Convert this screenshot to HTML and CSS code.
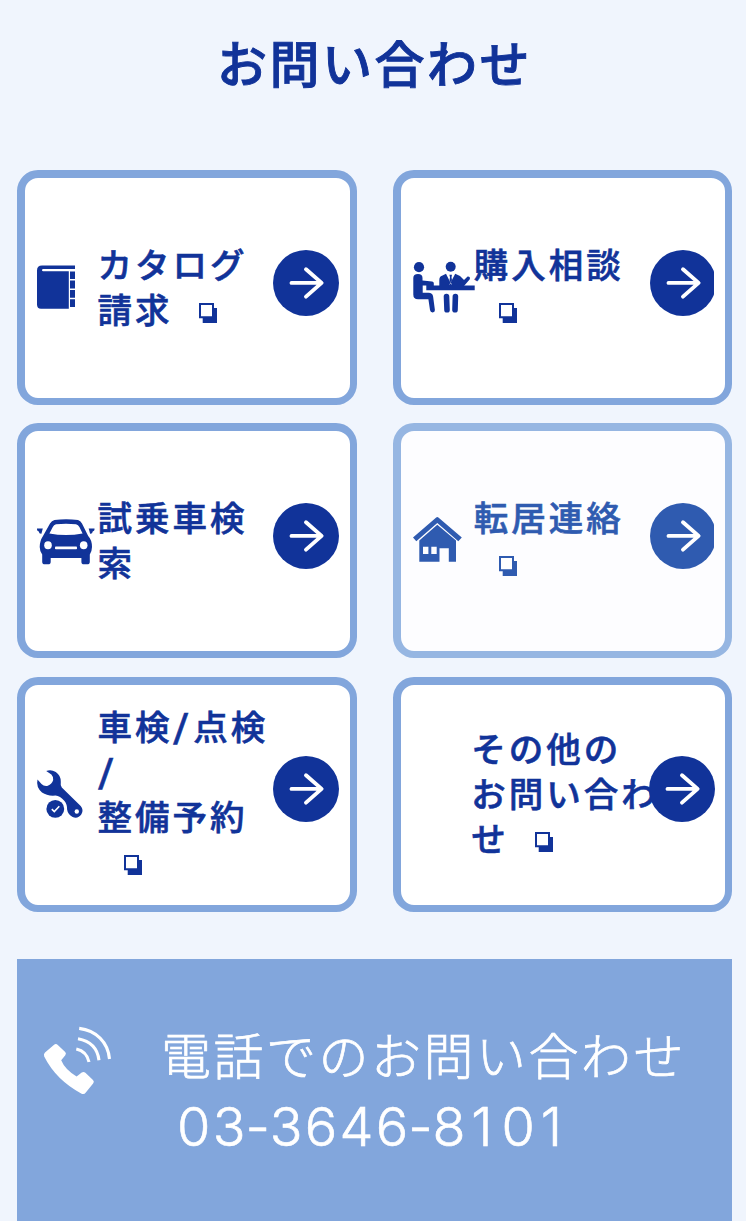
FILE: index.html
```html
<!DOCTYPE html>
<html lang="ja">
<head>
<meta charset="utf-8">
<title>お問い合わせ</title>
<link rel="stylesheet" href="styles.css">
</head>
<body>
<svg class="defs" width="0" height="0" aria-hidden="true">
  <symbol id="arrow" viewBox="0 0 66 66"><circle cx="33" cy="33" r="33" fill="currentColor"/><path d="M18.5 32.9H48M33 19.2L48.6 32.9L33 46.6" fill="none" stroke="#fff" stroke-width="3.9" stroke-linecap="round" stroke-linejoin="round"/></symbol>
  <symbol id="ext" viewBox="0 0 18 20"><path d="M3.7 5H18V20H3.7Z" fill="currentColor"/><path d="M1 1H14V14.3H1Z" fill="#fff" stroke="currentColor" stroke-width="2"/></symbol>
</svg>
<main class="page">
  <h1 class="title">お問い合わせ</h1>
  <nav class="cards">
    <a class="card">
      <svg class="icon" viewBox="0 0 61 60"><g fill="currentColor"><path d="M38 7.6H5Q0 7.6 0 12.6V46.6Q0 50.8 4 50.8H31.8V13.3H6.2Q5 13.3 5 12.2T6.2 11.1H38Z"/><path d="M33 13.5h5v7.6h-5zM33 22.6h5v7.8h-5zM33 31.9h5v7.8h-5zM33 41.2h5v7.8h-5z"/></g></svg>
      <span class="label"><span>カタログ</span><span>請求<svg class="ext after"><use href="#ext"/></svg></span></span>
      <svg class="arrow"><use href="#arrow"/></svg>
    </a>
    <a class="card">
      <svg class="icon" viewBox="0 0 61 60"><g fill="currentColor"><circle cx="6" cy="9.2" r="5.1"/><circle cx="37.7" cy="8.8" r="5"/><path d="M.3 20Q.3 15.9 5 15.9Q9.5 15.9 9.5 20V22.6L19 23.4Q20.8 23.7 20.8 25.2V27.5H61.7V32.2H13.3V27.6H9.7V34.8H15.5Q19.5 34.8 20.1 38.5L21.9 52Q22 54.2 19.7 54.4Q17.4 54.5 17 52L15.4 41.3H5Q.3 41.3 .3 36.5Z"/><path d="M26.3 27.5V22Q26.3 18.7 29 17.8L33 15.7L37.5 24.7L42.2 15.7L47 18L51 22L54.6 18.6Q57.6 18.4 56.8 21.3L51 28H26.3Z"/><path d="M36.4 16.8H39L38.5 19.3L39 22.3L37.7 24.4L36.5 22.3L37 19.3Z"/></g><path d="M33.5 38.5L34 51.8M42.4 38.5L42 51.8" stroke="currentColor" stroke-width="5.6" stroke-linecap="round"/><path d="M36.5 26.3l1.2-1 1.2 1" fill="none" stroke="#fff" stroke-width=".7"/></svg>
      <span class="label"><span>購入相談</span><span><svg class="ext indent"><use href="#ext"/></svg></span></span>
      <svg class="arrow clip"><use href="#arrow" width="66" height="66"/></svg>
    </a>
    <a class="card">
      <svg class="icon" viewBox="0 0 61 60"><g fill="currentColor"><path d="M0 17.5H5.8L4.4 22.8Q2 23 1.8 20.6Q0 20.3 0 18.6Z"/><path d="M57.5 17.5H51.7L53.1 22.8Q55.5 23 55.7 20.6Q57.5 20.3 57.5 18.6Z"/><path fill-rule="evenodd" d="M17.5 9Q29 7.5 41 9Q43.5 9.5 45 12.5L51.2 25Q55 29 55 36Q55 40 52.8 43.5V50.7Q52.8 53.3 50 53.3H47Q44.4 53.3 44.4 50.7V47H13.7V50.7Q13.7 53.3 11 53.3H8Q5.2 53.3 5.2 50.7V43.5Q2.7 40 2.7 36Q2.7 30 6 25L13 12.5Q14.7 9.5 17.5 9ZM19 13.2Q16.8 13.7 15.8 16L12.4 22.5Q29 25.5 45.6 22.5L42.4 16Q41.3 13.7 39 13.2Q29 12.2 19 13.2Z"/></g><g fill="#fff"><ellipse cx="11" cy="34.3" rx="3.8" ry="4"/><ellipse cx="46.7" cy="34.3" rx="3.8" ry="4"/><rect x="18" y="35.4" width="22" height="2.8" rx=".8"/></g></svg>
      <span class="label"><span>試乗車検</span><span>索</span></span>
      <svg class="arrow"><use href="#arrow"/></svg>
    </a>
    <a class="card faded">
      <svg class="icon" viewBox="0 0 61 60"><path fill="currentColor" fill-rule="evenodd" d="M23.2 6.5Q24.3 5.6 25.4 6.5L48.8 26.5L45.3 30.2L24.3 12.1L3.3 30.2L0 26.5ZM24.3 13.7L43 29.5V50.7H35.8V37.2H26.5V50.7H6.3V29.5ZM10 35.7V43.1H15.4V35.7ZM18.3 35.7V43.1H23.7V35.7Z"/></svg>
      <span class="label"><span>転居連絡</span><span><svg class="ext indent"><use href="#ext"/></svg></span></span>
      <svg class="arrow clip"><use href="#arrow" width="66" height="66"/></svg>
    </a>
    <a class="card">
      <svg class="icon" viewBox="0 0 61 60"><path fill="currentColor" d="M9.2 6.1Q14 4.1 18.8 7.1Q23.8 10.5 23.8 16.7Q23.2 20.8 24.8 22.5L43.7 41Q47 45.1 44.4 49.2Q41 54.1 35.6 52Q30.8 49.3 30.1 44.5Q30.2 39.3 27.5 36Q23 30.8 18.5 30.5Q10.5 31.3 5 27.5Q-1.2 22 .5 14.5L4.5 19Q6.8 21.4 10.2 20.9Q14.8 19.7 16.2 15Q16.7 11.9 14.4 9.4Z"/><circle cx="39.8" cy="46.5" r="2.2" fill="#fff"/><circle cx="18.3" cy="43.9" r="8.9" fill="currentColor"/><path d="M14.8 44.1l2.5 2.4 5-5.2" fill="none" stroke="#fff" stroke-width="1.6"/></svg>
      <span class="label"><span>車検<b class="slash">/</b>点検</span><span><b class="slash">/</b></span><span>整備予約</span><span><svg class="ext indent wide"><use href="#ext"/></svg></span></span>
      <svg class="arrow"><use href="#arrow"/></svg>
    </a>
    <a class="card">
      <span class="icon"></span>
      <span class="label other"><span>その他の</span><span>お問い合わ</span><span>せ<svg class="ext after"><use href="#ext"/></svg></span></span>
      <svg class="arrow"><use href="#arrow"/></svg>
    </a>
  </nav>
  <section class="phone">
    <svg class="phone-icon" viewBox="0 0 70 70"><path fill="#fff" d="M2 26.5L10.8 19Q12.9 17.2 14.8 19L22.2 26Q23.6 27.6 22.3 29.3L18.2 34.2Q22 43.5 33.6 50.4L38.7 46.6Q40.6 45.2 42.4 46.8L50 54Q51.7 55.8 50.1 57.6L42.8 66.5Q41.3 68.7 38.6 67.7Q13 54 1.2 30.5Q.3 28.1 2 26.5Z"/><g fill="none" stroke="#fff" stroke-width="3.1"><path d="M36.2 2.4C53 4.5 65 16 66.5 33"/><path d="M35 12.8C47 15 54.5 22 56 34.3"/><path d="M33.3 23C40 24.5 44.5 29 46 36"/></g></svg>
    <div class="phone-text"><p class="phone-label">電話でのお問い合わせ</p><p class="number">03<span class="dash">-</span>3646<span class="dash">-</span>8<span class="one">1</span>0<span class="one">1</span></p></div>
  </section>
</main>
</body>
</html>
```
FILE: styles.css
```css
* { box-sizing: border-box; }
body {
  margin: 0;
  background: #f0f5fd;
  color: #113399;
  font-family: "Noto Sans CJK JP", sans-serif;
}
.defs { display: block; }
.page {
  height: 1221px;
  padding: 24px 14px 0 17px;
  overflow: hidden;
}
.title {
  margin: 0 0 71px;
  font-size: 50px;
  line-height: 75px;
  font-weight: 500;
  letter-spacing: 2.5px;
  text-align: center;
  -webkit-text-stroke: .9px #113399;
}
.cards {
  display: grid;
  grid-template-columns: 339.5px 338.7px;
  grid-auto-rows: 235px;
  gap: 18.4px 36.8px;
}
.card {
  display: grid;
  grid-template-columns: 61px 175px 66px;
  align-items: center;
  padding-left: 12px;
  border: 7.7px solid #82a6dc;
  border-width: 8px 7.7px 7.7px 8px;
  border-radius: 21px;
  background: #fff;
}
.faded {
  color: #2f5bb0;
  border-color: #96b6e2;
  background: #fdfdff;
}
.icon { width: 61px; height: 60px; overflow: visible; }
.label {
  margin: -4px 0 0 -.5px;
  font-size: 34.5px;
  line-height: 45px;
  font-weight: 500;
  letter-spacing: 3px;
  white-space: nowrap;
  -webkit-text-stroke: .6px currentColor;
}
.label > span { display: block; height: 45px; }
.label.other { margin-left: -3px; }
.slash {
  margin-left: .8px;
  font-family: Roboto, sans-serif;
  font-size: 40px;
  line-height: 1;
  font-weight: 500;
  letter-spacing: 4.4px;
  vertical-align: -2px;
}
.ext { width: 18px; height: 20px; }
.ext.after { margin-left: 26px; }
.ext.indent { margin-left: 25px; }
.ext.wide { margin-left: 26.5px; }
.arrow { width: 66px; height: 66px; margin-top: -11px; }
.arrow.clip { width: 64px; margin-left: .4px; }
.phone {
  display: flex;
  gap: 48px;
  height: 262px;
  margin-top: 47.5px;
  padding: 67px 0 0 26px;
  background: #82a6dc;
  color: #fff;
}
.phone-icon { width: 70px; height: 70px; flex: none; }
.phone p { margin: 0; white-space: nowrap; }
.phone .phone-label {
  margin-top: -5px;
  font-size: 50px;
  line-height: 64px;
  font-weight: 300;
  letter-spacing: 2.5px;
  -webkit-text-stroke: .7px #fff;
}
.phone .number {
  margin-top: 5px;
  padding-left: 16px;
  font-family: Inter, sans-serif;
  font-size: 54px;
  line-height: 74px;
  font-weight: 300;
  letter-spacing: 2.3px;
  -webkit-text-stroke: .6px #fff;
}
.dash { margin-left: -2.3px; letter-spacing: -.2px; }
.one { margin-left: 3.5px; letter-spacing: 9px; }
```
